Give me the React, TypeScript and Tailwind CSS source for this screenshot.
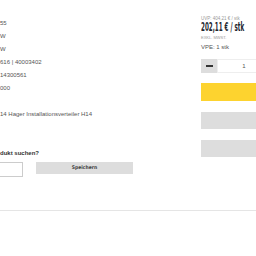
import React from 'react';

const rows = ['55', 'W', 'W', '616 | 40003402', '14300561', '000'];

const condensed = { fontFamily: '"DejaVu Sans Condensed", "Liberation Sans", sans-serif' };

const App: React.FC = () => {
    return (
        <div className="w-[256px] h-[256px] overflow-hidden bg-white" style={{ fontFamily: '"Liberation Sans", Arial, sans-serif' }}>
            <div className="flex h-[210px]">
                {/* left: product details */}
                <div className="w-[201px] shrink-0">
                    <div className="flex flex-col pt-[19px]">
                        {rows.map((r, i) => (
                            <div key={i} className="h-[13px] leading-[8px] text-[6px] text-[#555] whitespace-nowrap">{r}</div>
                        ))}
                        <div className="mt-[13px] h-[13px] leading-[8px] text-[6px] text-[#555] whitespace-nowrap">14 Hager Installationsverteiler H14</div>
                    </div>
                    <div className="mt-[26px] text-[6px] font-bold text-[#333] leading-[8px]">dukt suchen?</div>
                    <div className="mt-[5px] flex items-start">
                        <div className="w-[23px] h-[15px] bg-white border border-[#ccc] border-l-0"></div>
                        <div className="ml-[13px] w-[97px] h-[12px] bg-[#dddddd] flex items-center justify-center text-[5px] font-bold text-[#444]" style={condensed}>Speichern</div>
                    </div>
                </div>
                {/* right: price box */}
                <div className="w-[70px] shrink-0 pt-[16px]">
                    <div className="text-[4.5px] leading-[5px] text-[#999] whitespace-nowrap">UVP: 404,21 € / stk</div>
                    <div className="text-[12px] leading-[12px] font-bold text-[#23262f] whitespace-nowrap scale-x-[0.52] origin-left" style={condensed}>202,11 € / stk</div>
                    <div className="mt-[2px] text-[4px] leading-[5px] text-[#999] whitespace-nowrap">EXKL. MWST.</div>
                    <div className="mt-[4px] text-[6px] leading-[7px] text-[#555] whitespace-nowrap">VPE: 1 stk</div>
                    <div className="mt-[8px] flex h-[14px]">
                        <div className="w-[16px] bg-[#dddddd] flex items-center justify-center">
                            <div className="w-[7px] h-[2px] bg-[#333]"></div>
                        </div>
                        <div className="flex-1 bg-white border border-[#eee] flex items-center justify-center text-[6px] text-[#555]">1</div>
                    </div>
                    <div className="mt-[10px] h-[18px] bg-[#fdd32f]"></div>
                    <div className="mt-[11px] h-[17px] bg-[#dddddd]"></div>
                    <div className="mt-[11px] h-[17px] bg-[#dddddd]"></div>
                </div>
            </div>
            <div className="h-px bg-[#e5e5e5]"></div>
        </div>
    );
};

export default App;
